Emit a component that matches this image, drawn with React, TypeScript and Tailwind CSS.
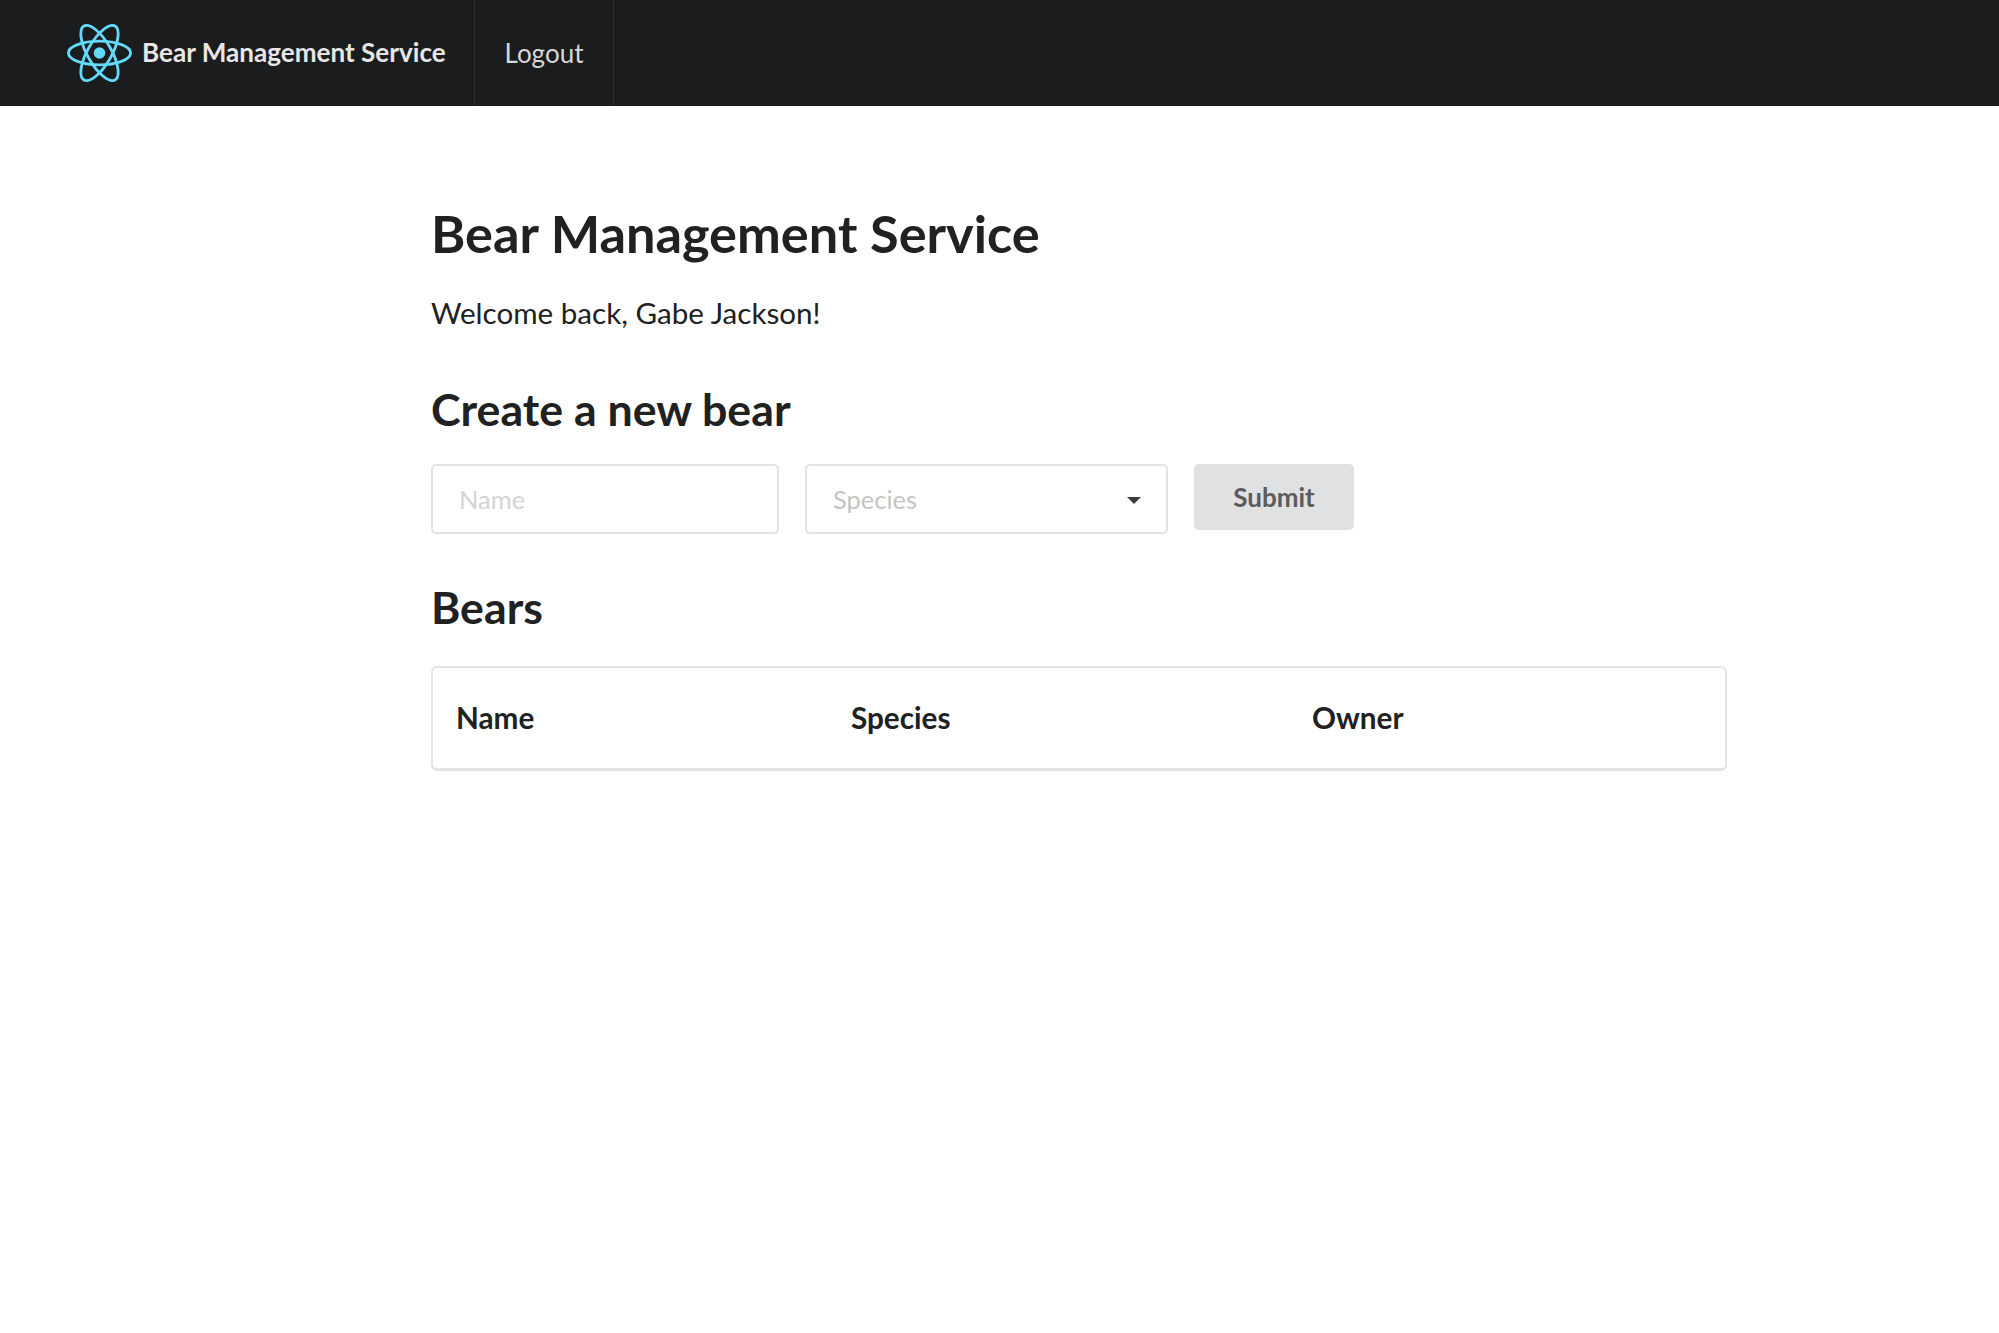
function ReactLogo() {
  return (
    <svg viewBox="-11.5 -10.23 23 20.46" className="w-[65px] h-[58px]" fill="none">
      <circle r="2.05" fill="#61dafb" />
      <g stroke="#61dafb" strokeWidth="1">
        <ellipse rx="11" ry="4.2" />
        <ellipse rx="11" ry="4.2" transform="rotate(60)" />
        <ellipse rx="11" ry="4.2" transform="rotate(120)" />
      </g>
    </svg>
  );
}

export default function App() {
  return (
    <div className="min-h-[1333px] bg-white text-[#212121] font-['Lato',sans-serif]">
      {/* Top menu */}
      <nav className="flex h-[106px] bg-[#1b1c1d] pl-[67px]">
        <div className="flex items-center gap-[10px] w-[408px] border-r border-[#2d2e2f]">
          <ReactLogo />
          <span className="text-[26.1px] font-bold text-[#e6e6e6]">Bear Management Service</span>
        </div>
        <div className="flex items-center justify-center w-[139px] border-r border-[#2d2e2f]">
          <span className="text-[26px] text-[#d8d8d8]">Logout</span>
        </div>
      </nav>

      <main className="ml-[431px] w-[1296px] pt-[95px]">
        <h1 className="text-[52.3px] leading-[64px] font-bold">Bear Management Service</h1>
        <p className="mt-[28px] text-[29.6px] leading-[40px]">Welcome back, Gabe Jackson!</p>

        <h2 className="mt-[48px] text-[44.7px] leading-[56px] font-bold">Create a new bear</h2>

        {/* Form */}
        <form className="mt-[27px] flex items-start gap-[26px]">
          <input
            placeholder="Name"
            className="w-[348px] h-[70px] px-[26px] rounded-[5px] border-2 border-[#e2e2e2] text-[25.5px] placeholder:text-[#d4d4d4] outline-none"
          />
          <div className="flex items-center justify-between w-[363px] h-[70px] pl-[26px] pr-[25px] rounded-[5px] border-2 border-[#e2e2e2]">
            <span className="text-[25.5px] text-[#c4c4c4]">Species</span>
            <span className="mt-[2px] w-0 h-0 border-x-[7px] border-x-transparent border-t-[7px] border-t-[#3c3c3c]" />
          </div>
          <button
            type="button"
            className="w-[160px] h-[66px] rounded-[5px] bg-[#e0e1e2] text-[26px] font-bold text-[#5c5c5c]"
          >
            Submit
          </button>
        </form>

        <h2 className="mt-[45px] text-[44.7px] leading-[56px] font-bold">Bears</h2>

        {/* Table */}
        <div className="mt-[31px] rounded-[6px] border-2 border-b-[3px] border-[#e4e4e4]">
          <table className="w-full table-fixed text-left">
            <thead>
              <tr className="h-[100px] text-[29.7px] font-bold">
                <th className="w-[394px] pl-[23px]">Name</th>
                <th className="w-[461px] pl-[24px]">Species</th>
                <th className="pl-[24px]">Owner</th>
              </tr>
            </thead>
          </table>
        </div>
      </main>
    </div>
  );
}
